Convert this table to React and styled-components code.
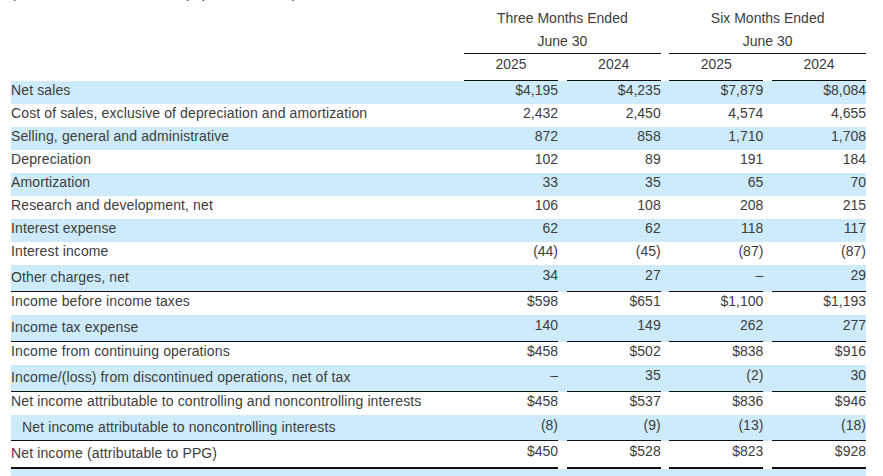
import React from "react";
import styled, { createGlobalStyle } from "styled-components";

const BLUE = "#cdebfb";
const INK = "#3d3d3d";
const LINE = "#111";

const GlobalStyle = createGlobalStyle`
  body {
    margin: 0;
    background: #fff;
    color: ${INK};
    font-family: "Liberation Sans", Arial, sans-serif;
    font-size: 14px;
  }
`;

const Page = styled.div`
  width: 855px;
  margin-left: 11px;
`;

// only the tail of the caption line shows at the top edge
const Caption = styled.div`
  margin-top: -18px;
  line-height: 22px;
  white-space: nowrap;
`;

const HeadRow = styled.div`
  display: flex;
  padding-top: ${(p) => (p.$top ? "3px" : "0")};
`;

const Spacer = styled.div`
  flex: 1;
`;

const Group = styled.div`
  width: 196.67px;
  line-height: 23px;
  text-align: center;
  border-bottom: 1px solid ${LINE};

  & + & {
    margin-left: 8.67px;
  }
`;

const Year = styled.div`
  width: 94px;
  line-height: 21px;
  padding-bottom: 5px;
  text-align: center;
  border-bottom: 1px solid ${LINE};

  & + & {
    margin-left: 8.67px;
  }
`;

const Row = styled.div`
  display: flex;
  background: ${(p) => (p.$shaded ? BLUE : "transparent")};
`;

const Label = styled.div`
  flex: 1;
  box-sizing: border-box;
  height: ${(p) => p.$h}px;
  padding-top: ${(p) => (p.$rule ? 3 : 0)}px;
  padding-left: ${(p) => (p.$indent ? 11 : 0)}px;
  line-height: 19px;
  letter-spacing: 0.12px;
  white-space: nowrap;
  border-bottom: ${(p) => (p.$rule ? `${p.$rule}px solid ${LINE}` : "none")};
`;

const Value = styled.div`
  width: 94px;
  box-sizing: border-box;
  height: ${(p) => p.$h}px;
  padding-top: ${(p) => (p.$rule ? 1 : 0)}px;
  line-height: 19px;
  text-align: right;
  white-space: nowrap;
  border-bottom: ${(p) => (p.$rule ? `${p.$rule}px solid ${LINE}` : "none")};

  & + & {
    margin-left: 8.67px;
  }
`;

const rows = [
  ["Net sales", ["$4,195", "$4,235", "$7,879", "$8,084"]],
  ["Cost of sales, exclusive of depreciation and amortization", ["2,432", "2,450", "4,574", "4,655"]],
  ["Selling, general and administrative", ["872", "858", "1,710", "1,708"]],
  ["Depreciation", ["102", "89", "191", "184"]],
  ["Amortization", ["33", "35", "65", "70"]],
  ["Research and development, net", ["106", "108", "208", "215"]],
  ["Interest expense", ["62", "62", "118", "117"]],
  ["Interest income", ["(44)", "(45)", "(87)", "(87)"]],
  ["Other charges, net", ["34", "27", "–", "29"], { rule: 1, h: 27 }],
  ["Income before income taxes", ["$598", "$651", "$1,100", "$1,193"]],
  ["Income tax expense", ["140", "149", "262", "277"], { rule: 1, h: 27 }],
  ["Income from continuing operations", ["$458", "$502", "$838", "$916"]],
  ["Income/(loss) from discontinued operations, net of tax", ["–", "35", "(2)", "30"], { rule: 1, h: 27 }],
  ["Net income attributable to controlling and noncontrolling interests", ["$458", "$537", "$836", "$946"]],
  ["Net income attributable to noncontrolling interests", ["(8)", "(9)", "(13)", "(18)"], { rule: 1, h: 26, indent: true }],
  ["Net income (attributable to PPG)", ["$450", "$528", "$823", "$928"], { rule: 2, h: 28 }],
  ["Earnings per common share:", ["", "", "", ""], { h: 23, pad: true }],
];

export default function App() {
  return (
    <Page>
      <GlobalStyle />
      <Caption>(Unaudited, in millions, except per share data)</Caption>

      <HeadRow $top>
        <Spacer />
        <Group>
          Three Months Ended
          <br />
          June 30
        </Group>
        <Group>
          Six Months Ended
          <br />
          June 30
        </Group>
      </HeadRow>
      <HeadRow>
        <Spacer />
        <Year>2025</Year>
        <Year>2024</Year>
        <Year>2025</Year>
        <Year>2024</Year>
      </HeadRow>

      {rows.map(([label, values, opts = {}], i) => {
        const h = opts.h || 23;
        return (
          <Row key={label} $shaded={i % 2 === 0}>
            <Label $h={h} $rule={opts.rule} $indent={opts.indent}>
              {opts.pad ? "\u00a0" : label}
            </Label>
            {values.map((v, j) => (
              <Value key={j} $h={h} $rule={opts.rule}>
                {v}
              </Value>
            ))}
          </Row>
        );
      })}
    </Page>
  );
}
